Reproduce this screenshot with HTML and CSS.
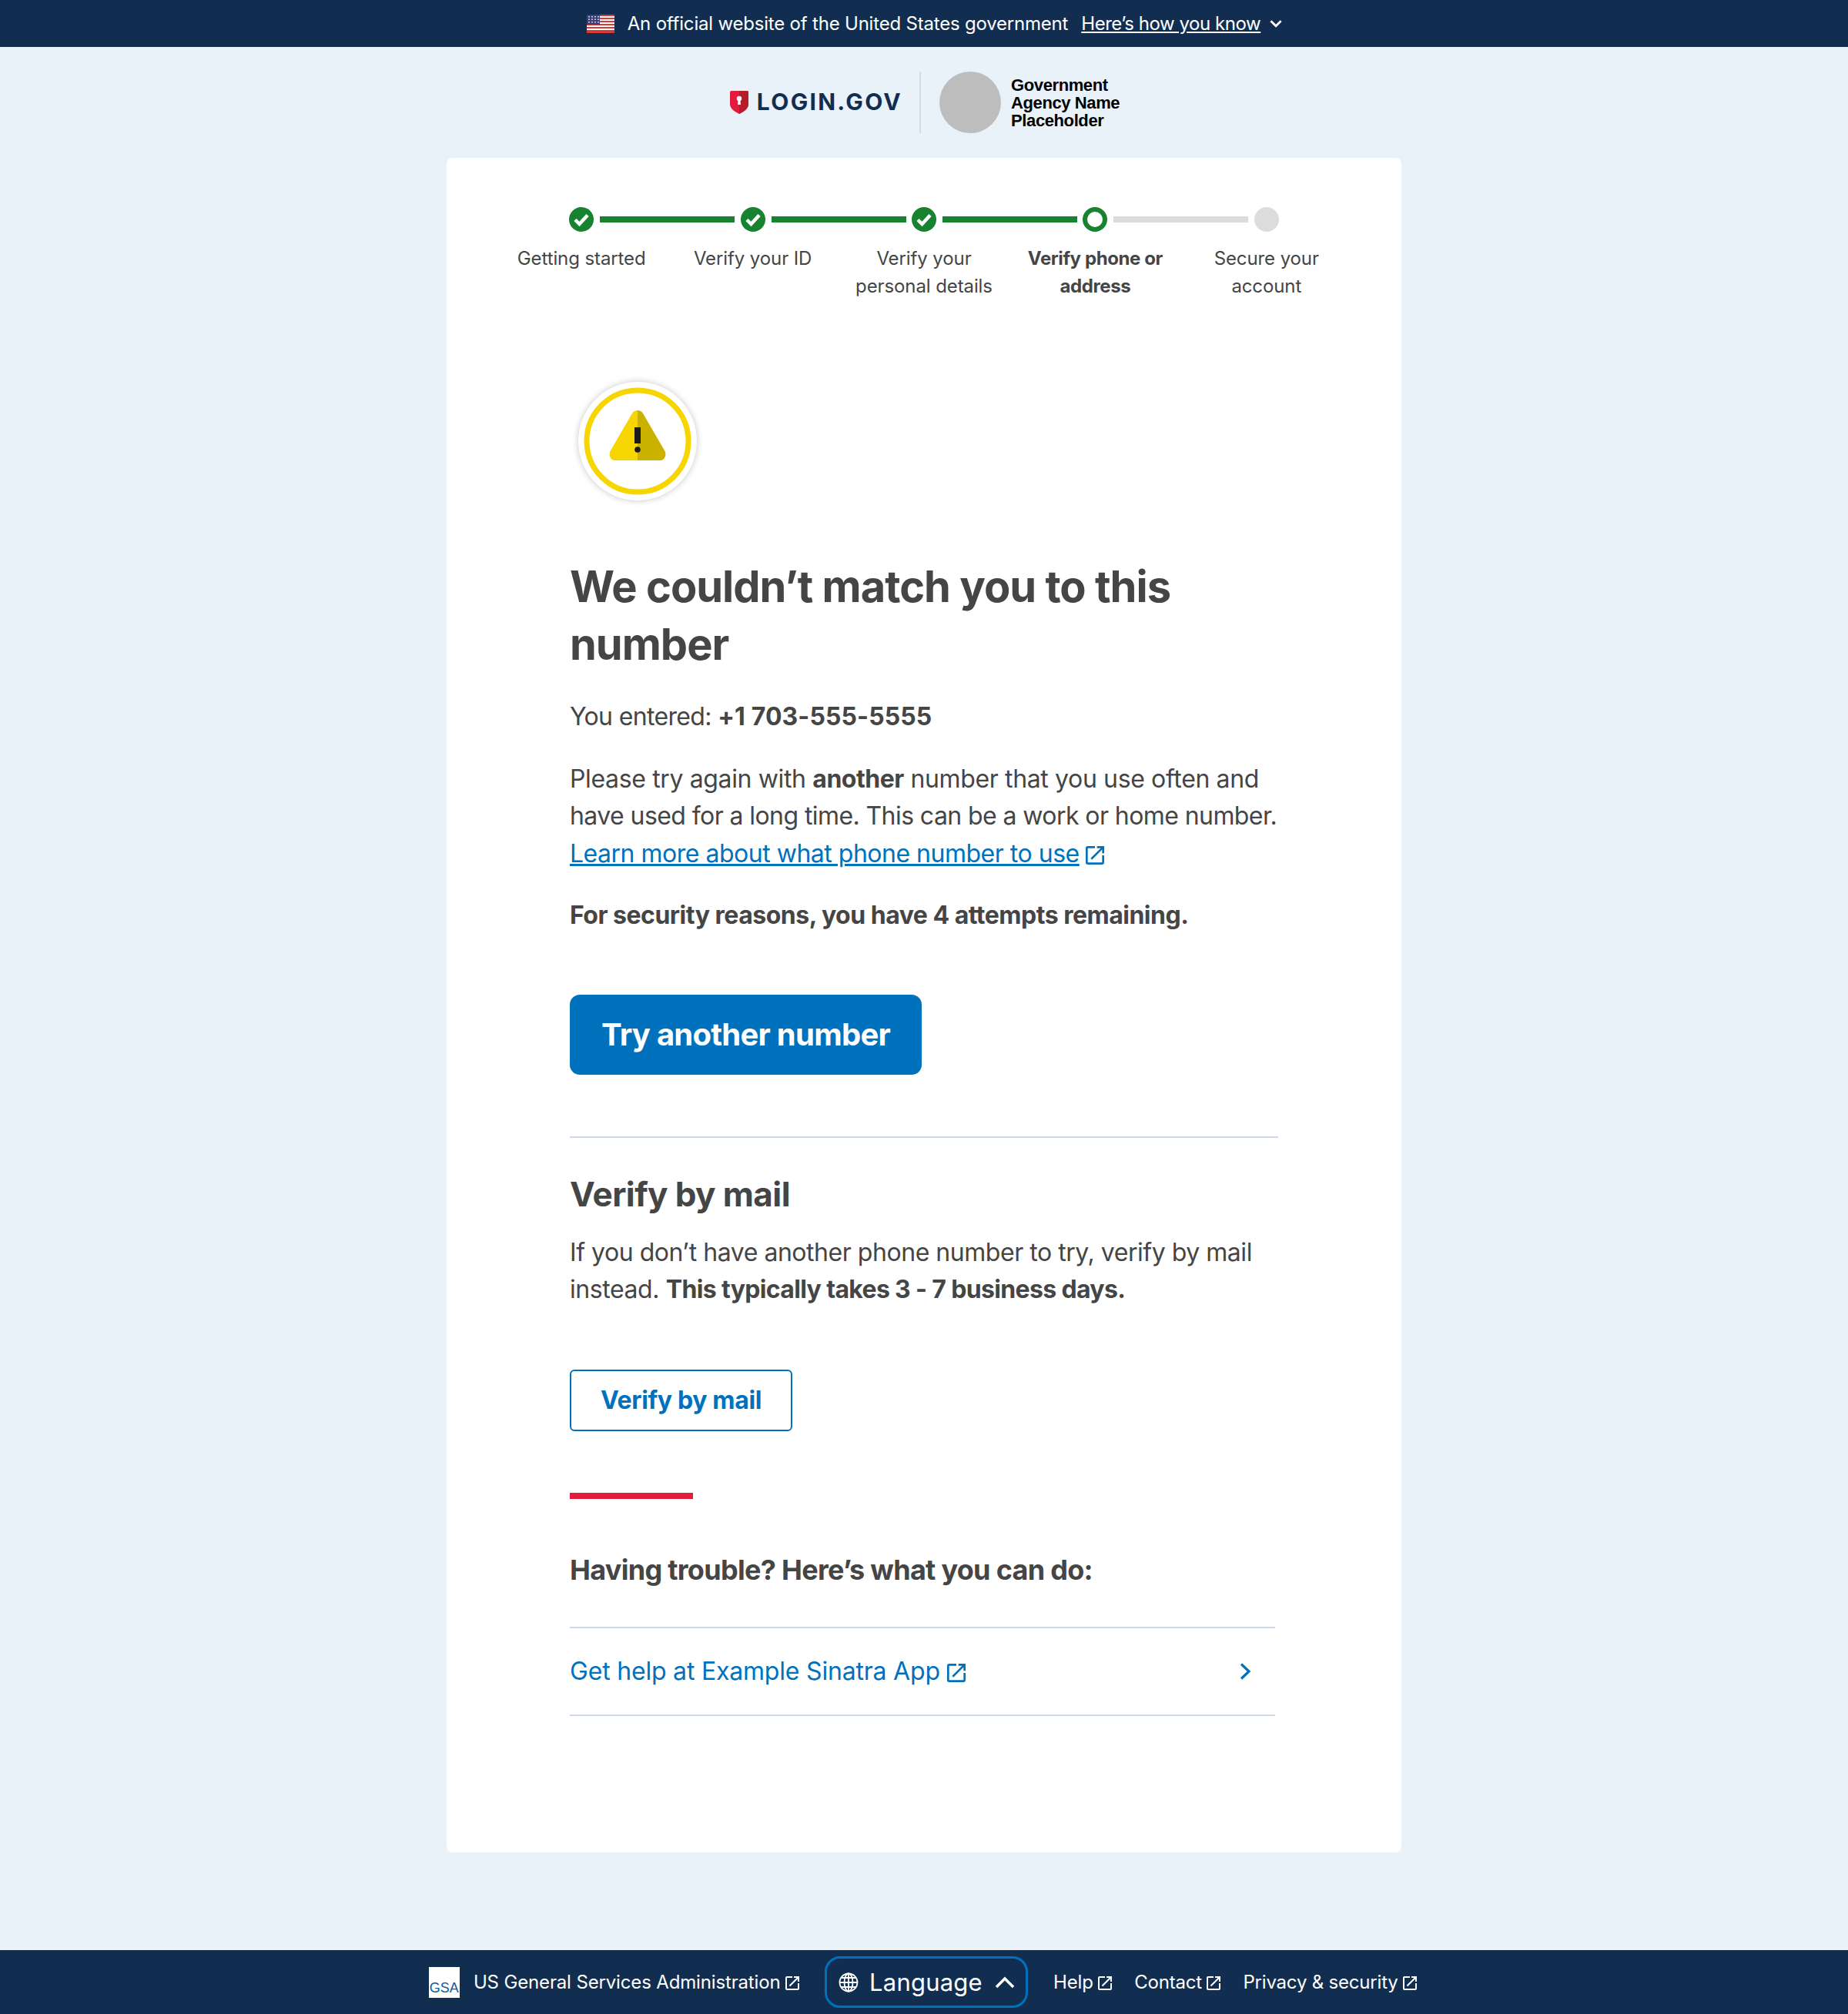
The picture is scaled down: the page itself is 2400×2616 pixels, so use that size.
FILE: index.html
```html
<!DOCTYPE html>
<html lang="en">
<head>
<meta charset="utf-8">
<title>Login.gov</title>
<link rel="stylesheet" href="styles.css">
</head>
<body>
<svg class="defs" aria-hidden="true"><symbol id="ext" viewBox="3 3 18 18"><path d="M19 19H5V5h7V3H5a2 2 0 0 0-2 2v14a2 2 0 0 0 2 2h14c1.100 0 2-.9 2-2v-7h-2v7zM14 3v2h3.590l-9.830 9.830 1.410 1.410L19 6.410V10h2V3h-7z" fill="currentColor"/></symbol>
<symbol id="chk" viewBox="0 0 32 32"><circle cx="16" cy="16" r="16" fill="#178230"/><path d="M8 16.500l5.500 5.500L24 10.500" fill="none" stroke="#fff" stroke-width="4.500"/></symbol></svg>
<header class="banner">
  <svg class="flag" viewBox="0 0 36 24"><rect width="36" height="24" fill="#fff"/><g fill="#d83933"><rect width="36" height="2"/><rect y="4" width="36" height="2"/><rect y="8" width="36" height="2"/><rect y="12" width="36" height="2"/><rect y="16" width="36" height="2"/><rect y="20" width="36" height="2"/></g><rect y="22" width="36" height="2" fill="#d83933"/><rect width="17" height="13" fill="#3f3f78"/><g fill="#ccd"><rect x="2" y="2" width="2" height="1.500"/><rect x="6" y="2" width="2" height="1.500"/><rect x="10" y="2" width="2" height="1.500"/><rect x="14" y="2" width="2" height="1.500"/><rect x="2" y="5.500" width="2" height="1.500"/><rect x="6" y="5.500" width="2" height="1.500"/><rect x="10" y="5.500" width="2" height="1.500"/><rect x="14" y="5.500" width="2" height="1.500"/><rect x="2" y="9" width="2" height="1.500"/><rect x="6" y="9" width="2" height="1.500"/><rect x="10" y="9" width="2" height="1.500"/><rect x="14" y="9" width="2" height="1.500"/></g></svg>
  <span class="banner-text">An official website of the United States government</span>
  <a class="banner-link">Here’s how you know</a>
  <svg class="banner-chev" viewBox="0 0 16 10"><path d="M2 2l6 6 6-6" fill="none" stroke="#fff" stroke-width="2.500"/></svg>
</header>
<div class="brand">
  <svg class="shield" viewBox="0 0 24 30"><path d="M2 0h20a2 2 0 0 1 2 2v15c0 6-6 10-12 13C6 27 0 23 0 17V2a2 2 0 0 1 2-2z" fill="#e21c3d"/><path d="M12 0h10a2 2 0 0 1 2 2v15c0 6-6 10-12 13z" fill="#b51d2a"/><circle cx="12" cy="10" r="3.200" fill="#fff"/><path d="M10.700 11h2.600l.7 7h-4z" fill="#fff"/></svg>
  <span class="wordmark">LOGIN.GOV</span>
  <span class="brand-rule"></span>
  <span class="agency-dot"></span>
  <span class="agency-name">Government<br>Agency Name<br>Placeholder</span>
</div>
<main class="card">
  <ol class="steps">
    <li class="step done"><svg class="mark"><use href="#chk"/></svg><span class="step-label">Getting started</span></li>
    <li class="step done"><svg class="mark"><use href="#chk"/></svg><span class="step-label">Verify your ID</span></li>
    <li class="step done"><svg class="mark"><use href="#chk"/></svg><span class="step-label">Verify your<br>personal details</span></li>
    <li class="step current"><span class="mark ring"></span><span class="step-label">Verify phone or<br>address</span></li>
    <li class="step todo"><span class="mark dot"></span><span class="step-label">Secure your<br>account</span></li>
  </ol>
  <div class="content">
    <svg class="alert" viewBox="0 0 176 176">
      <defs><filter id="sh" x="-20%" y="-20%" width="140%" height="140%"><feGaussianBlur stdDeviation="4"/></filter></defs>
      <circle cx="88" cy="88" r="77" fill="#000" opacity=".22" filter="url(#sh)"/>
      <circle cx="88" cy="88" r="77" fill="#fff"/>
      <circle cx="88" cy="88" r="66" fill="#fff" stroke="#f6d500" stroke-width="7"/>
      <path d="M88 48c-3 0-5.500 1.500-7 4L52.500 101c-2.500 4.500 .5 12 5.500 12H88z" fill="#f6d500"/>
      <path d="M88 48c3 0 5.500 1.500 7 4l28.500 49c2.500 4.500-.5 12-5.500 12H88z" fill="#cbb200"/>
      <rect x="84" y="70" width="8" height="21" fill="#1b1b1b"/><circle cx="88" cy="99" r="3.800" fill="#1b1b1b"/>
    </svg>
    <h1 class="title">We couldn’t match you to this number</h1>
    <p class="text"><span class="entered">You entered:</span> <b class="phone">+1 703-555-5555</b></p>
    <p class="text"><span class="line-a">Please try again with <b>another</b> number that you use often and</span><br><span class="line-b">have used for a long time. This can be a work or home number.</span><br><a class="link">Learn more about what phone number to use</a> <svg class="ext"><use href="#ext"/></svg></p>
    <p class="text"><b>For security reasons, you have 4 attempts remaining.</b></p>
    <a class="btn-primary">Try another number</a>
    <hr class="rule">
    <h2 class="subtitle">Verify by mail</h2>
    <p class="text tight"><span class="line-c">If you don’t have another phone number to try, verify by mail</span><br>instead. <b class="days">This typically takes 3 - 7 business days.</b></p>
    <a class="btn-outline">Verify by mail</a>
    <div class="accent"></div>
    <h3 class="trouble">Having trouble? Here’s what you can do:</h3>
    <a class="help-row"><span>Get help at Example Sinatra App <svg class="ext"><use href="#ext"/></svg></span><svg class="help-chev" viewBox="0 0 15 22"><path d="M2 1.500l10 9.500-10 9.500" fill="none" stroke="#0071bc" stroke-width="3.200"/></svg></a>
  </div>
</main>
<footer class="footer">
  <span class="gsa">GSA</span>
  <a class="foot-link gsa-link">US General Services Administration <svg class="ext"><use href="#ext"/></svg></a>
  <button class="lang">
    <svg class="globe" viewBox="0 0 26 26"><g fill="none" stroke="#fff" stroke-width="1.800"><circle cx="13" cy="13" r="11.500"/><ellipse cx="13" cy="13" rx="5.500" ry="11.500"/><path d="M13 1.500v23M1.500 13h23M3 7h20M3 19h20"/></g></svg>
    <span>Language</span>
    <svg class="lang-chev" viewBox="0 0 26 16"><path d="M2 14L13 3l11 11" fill="none" stroke="#fff" stroke-width="3.500"/></svg>
  </button>
  <a class="foot-link">Help <svg class="ext"><use href="#ext"/></svg></a>
  <a class="foot-link">Contact <svg class="ext"><use href="#ext"/></svg></a>
  <a class="foot-link">Privacy &amp; security <svg class="ext"><use href="#ext"/></svg></a>
</footer>
</body>
</html>
```

FILE: styles.css
```css
* { box-sizing: border-box; }
html, body { margin: 0; padding: 0; }
body { background: #e9f2f9; font-family: "Inter", "Liberation Sans", sans-serif; color: #454545; min-height: 2616px; display: flex; flex-direction: column; }
.defs { display: none; }
.banner { height: 61px; background: #112e51; color: #fff; display: flex; align-items: center; justify-content: center; font-size: 24px; letter-spacing: -0.2px; padding-left: 28px; }
.flag { width: 36px; height: 24px; margin-right: 17px; }
.banner-link { margin-left: 17px; text-decoration: underline; letter-spacing: -0.45px; }
.banner-chev { width: 18px; height: 11px; margin-left: 11px; }
.brand { height: 144px; display: flex; align-items: center; justify-content: center; padding-left: 2px; }
.shield { width: 24px; height: 30px; margin-right: 11px; }
.wordmark { font-size: 30px; font-weight: 700; letter-spacing: 2.300px; color: #112e51; margin-top: -2px; }
.brand-rule { width: 2px; height: 80px; background: #cfdcea; margin: 0 24px 0 22px; }
.agency-dot { width: 80px; height: 80px; border-radius: 50%; background: #bdbdbd; margin-right: 13px; }
.agency-name { font-family: "Liberation Sans", sans-serif; font-weight: 700; font-size: 22px; line-height: 23px; color: #000; letter-spacing: -0.4px; }
.card { width: 1240px; margin: 0 auto; background: #fff; border-radius: 8px; padding: 64px 64px 177px; }
.steps { list-style: none; margin: 0; padding: 0; display: grid; grid-template-columns: repeat(5, 1fr); }
.step { position: relative; display: flex; flex-direction: column; align-items: center; text-align: center; font-size: 24px; line-height: 36px; letter-spacing: -0.1px; }
.step:not(:last-child)::after { content: ""; position: absolute; top: 12px; left: calc(50% + 24px); width: 175px; height: 8px; background: #178230; }
.step.current::after { background: #dcdcdc !important; }
.mark { width: 32px; height: 32px; display: block; margin-bottom: 17px; }
.ring { border: 6px solid #178230; border-radius: 50%; background: #fff; }
.dot { border-radius: 50%; background: #dcdcdc; }
.current .step-label { font-weight: 700; letter-spacing: -0.4px; }
.content { padding: 95px 96px 0; }
.alert { display: block; width: 176px; height: 176px; }
.title { margin: 64px 0 0; font-size: 56px; line-height: 75px; font-weight: 700; letter-spacing: -1px; }
.text { margin: 32px 0 0; font-size: 32px; line-height: 48.500px; letter-spacing: -0.42px; white-space: nowrap; }
.text b { letter-spacing: -0.5px; }
.text b.phone { letter-spacing: 0.1px; }
.entered { letter-spacing: -0.67px; }
.line-a { letter-spacing: -0.36px; }
.line-b { letter-spacing: -0.58px; }
.line-c { letter-spacing: -0.46px; }
.text b.days { letter-spacing: -0.65px; }
.text.tight { margin-top: 22px; }
.link { color: #0071bc; text-decoration: underline; letter-spacing: -0.49px; }
.ext { width: 24px; height: 24px; color: inherit; vertical-align: -3px; }
.text .ext { color: #0071bc; }
.btn-primary { display: inline-flex; align-items: center; justify-content: center; width: 457px; height: 104px; margin-top: 78px; background: #0071bc; color: #fff; font-size: 40px; font-weight: 700; border-radius: 13px; letter-spacing: -0.74px; }
.rule { border: 0; border-top: 2px solid #cdd9ec; margin: 80px 0 0; }
.subtitle { margin: 43px 0 0; font-size: 44px; line-height: 60px; font-weight: 700; letter-spacing: -0.6px; }
.btn-outline { display: flex; align-items: center; justify-content: center; width: 289px; height: 80px; margin-top: 79px; border: 2px solid #0071bc; color: #0071bc; font-size: 32px; font-weight: 700; border-radius: 6px; letter-spacing: -0.36px; }
.accent { width: 160px; height: 8px; background: #e21c3d; margin-top: 80px; }
.trouble { margin: 65px 0 0; font-size: 36px; line-height: 54px; font-weight: 700; letter-spacing: -0.7px; }
.help-row { display: flex; align-items: center; justify-content: space-between; width: 916px; height: 116px; margin-top: 47px; border-top: 2px solid #cdd9ec; border-bottom: 2px solid #cdd9ec; color: #0071bc; font-size: 32px; padding-right: 31px; letter-spacing: -0.2px; }
.help-chev { width: 15px; height: 22px; }
.footer { margin-top: auto; height: 83px; background: #112e51; color: #fff; display: flex; align-items: center; justify-content: center; font-size: 24px; letter-spacing: -0.2px; padding-right: 3px; }
.gsa { width: 40px; height: 40px; background: #fff; color: #125a96; font-family: "Liberation Sans", sans-serif; font-size: 18px; letter-spacing: 0; display: flex; align-items: flex-end; justify-content: center; padding-bottom: 2px; margin-right: 18px; }
.foot-link { margin-left: 29px; white-space: nowrap; }
.foot-link .ext { width: 18px; height: 18px; vertical-align: -2px; }
.gsa-link { margin-left: 0; letter-spacing: -0.15px; }
.lang { width: 264px; height: 67px; margin-left: 33px; background: transparent; border: 3px solid #0071bc; border-radius: 20px; color: #fff; font: inherit; font-size: 31px; letter-spacing: 0.2px; display: flex; align-items: center; padding: 0 14px 0 15px; margin-right: 4px; }
.globe { width: 26px; height: 26px; margin-right: 14px; flex: none; }
.lang-chev { width: 26px; height: 16px; margin-left: auto; }
```
